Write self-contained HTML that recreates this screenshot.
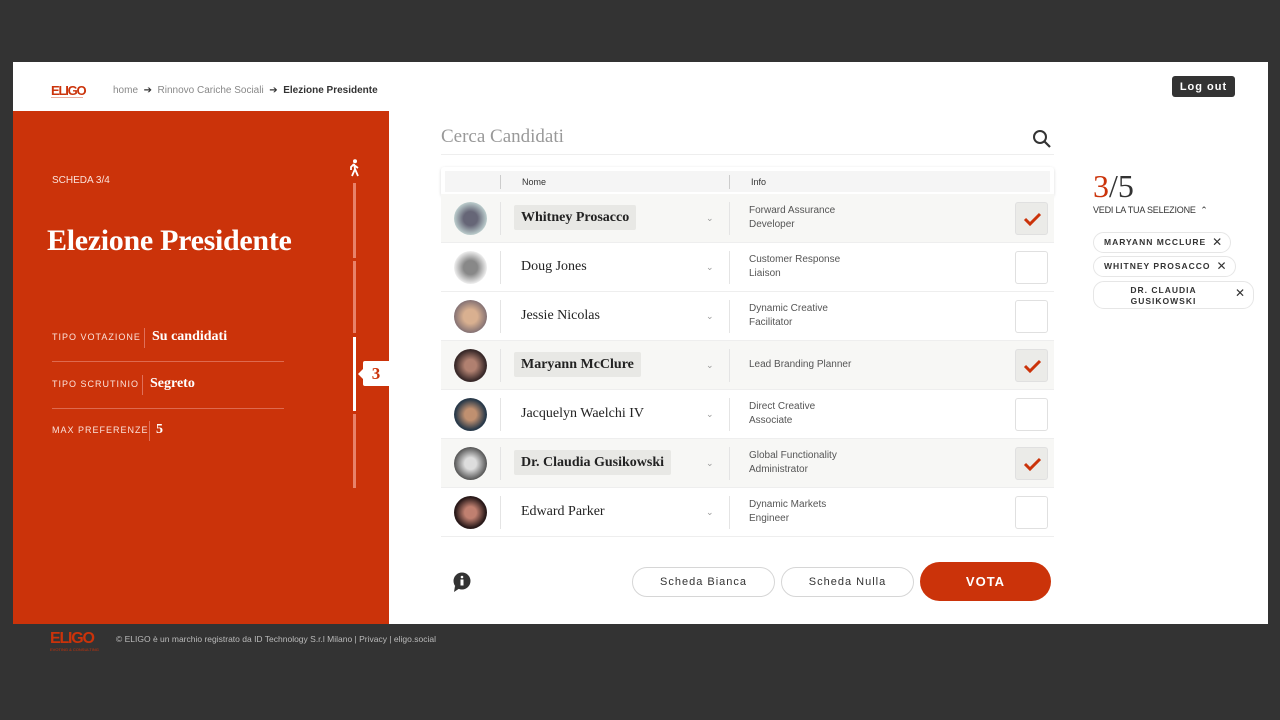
<!DOCTYPE html>
<html><head><meta charset="utf-8"><style>
*{box-sizing:border-box;margin:0;padding:0}
body{width:1280px;height:720px;background:#333;font-family:"Liberation Sans",sans-serif;position:relative;overflow:hidden}
.abs{position:absolute}
.serif{font-family:"Liberation Serif",serif}
#page{left:13px;top:62px;width:1255px;height:562px;background:#fff}
#red{left:13px;top:111px;width:376px;height:513px;background:#cb330a}
.lbl{font-size:9px;letter-spacing:1px;color:#fbe3dc}
.val{font-family:"Liberation Serif",serif;font-weight:bold;color:#fff;font-size:14px}
.row{position:absolute;left:441px;width:613px;height:49px;border-bottom:1px solid #eee}
.row.sel{background:#f7f7f5}
.av{position:absolute;left:13px;top:8px;width:33px;height:33px;border-radius:50%}
.vsep{position:absolute;width:1px;background:#e4e4e4}
.nm{position:absolute;left:73px;top:11px;height:25px;line-height:25px;padding:0 7px;font-family:"Liberation Serif",serif;font-size:14px;color:#222;border-radius:2px}
.sel .nm{background:#e8e8e5;font-weight:bold}
.info{position:absolute;left:308px;top:10px;font-size:10px;line-height:14px;color:#555}
.chev{position:absolute;left:265px;top:19px;font-size:9px;color:#999}
.cb{position:absolute;left:574px;top:8px;width:33px;height:33px;border:1px solid #e0e0e0;border-radius:3px;background:#fff}
.sel .cb{background:#ebebe8}
.chip{position:absolute;left:1093px;height:21px;border:1px solid #e6e6e6;border-radius:11px;font-size:8.5px;letter-spacing:1px;font-weight:bold;color:#333;line-height:19px;padding:0 24px 0 10px;white-space:nowrap}
.chip b{position:absolute;right:7px;top:0;font-size:12px;font-weight:normal}
.btn{position:absolute;top:567px;height:30px;border:1px solid #d6d6d6;border-radius:15px;font-size:11px;letter-spacing:1px;color:#333;text-align:center;line-height:28px;background:#fff}
</style></head><body>
<div id="page" class="abs"></div>
<div class="abs" style="left:51px;top:83px;color:#cb330a;font-weight:bold;font-size:13px;letter-spacing:-1.2px">ELIGO</div>
<div class="abs" style="left:51px;top:97px;width:32px;height:1px;background:#cb330a;opacity:.4"></div>
<div class="abs" style="left:113px;top:85px;font-size:10px;color:#888">home &nbsp;<span style="color:#333">➔</span>&nbsp; Rinnovo Cariche Sociali &nbsp;<span style="color:#333">➔</span>&nbsp; <b style="color:#333">Elezione Presidente</b></div>
<div class="abs" style="left:1172px;top:76px;width:63px;height:21px;background:#333;border-radius:3px;color:#fff;font-size:11px;font-weight:bold;letter-spacing:1px;text-align:center;line-height:22px">Log out</div>

<div id="red" class="abs"></div>
<div class="abs lbl" style="left:52px;top:175px;font-size:10px;letter-spacing:0">SCHEDA 3/4</div>
<div class="abs serif" style="left:47px;top:224px;font-size:30px;font-weight:bold;color:#fff;letter-spacing:-0.3px">Elezione Presidente</div>
<svg class="abs" style="left:347px;top:159px" width="14" height="18" viewBox="0 0 14 18"><circle cx="8" cy="2.2" r="2" fill="#fff"/><path d="M7 5L4 8v3M7 5l1 5-3 7M8 10l3 7M7 6l4 3" fill="none" stroke="#fff" stroke-width="1.8"/></svg>
<div class="abs" style="left:353px;top:183px;width:3px;height:75px;background:#e8826a"></div>
<div class="abs" style="left:353px;top:261px;width:3px;height:72px;background:#e8826a"></div>
<div class="abs" style="left:353px;top:337px;width:3px;height:74px;background:#fff"></div>
<div class="abs" style="left:353px;top:414px;width:3px;height:74px;background:#e8826a"></div>
<div class="abs serif" style="left:363px;top:361px;width:26px;height:25px;background:#fff;border-radius:2px 0 0 2px;color:#cb330a;font-weight:bold;font-size:17px;text-align:center;line-height:25px">3</div>
<div class="abs" style="left:358px;top:369px;width:0;height:0;border:5px solid transparent;border-right-color:#fff;border-left:0"></div>

<div class="abs lbl" style="left:52px;top:332px">TIPO VOTAZIONE</div>
<div class="abs" style="left:144px;top:328px;width:1px;height:20px;background:#e0705a"></div>
<div class="abs val" style="left:152px;top:329px">Su candidati</div>
<div class="abs" style="left:52px;top:361px;width:232px;height:1px;background:#de6a4f"></div>
<div class="abs lbl" style="left:52px;top:379px">TIPO SCRUTINIO</div>
<div class="abs" style="left:142px;top:375px;width:1px;height:20px;background:#e0705a"></div>
<div class="abs val" style="left:150px;top:376px">Segreto</div>
<div class="abs" style="left:52px;top:408px;width:232px;height:1px;background:#de6a4f"></div>
<div class="abs lbl" style="left:52px;top:425px">MAX PREFERENZE</div>
<div class="abs" style="left:149px;top:421px;width:1px;height:20px;background:#e0705a"></div>
<div class="abs val" style="left:156px;top:422px">5</div>

<div class="abs serif" style="left:441px;top:126px;font-size:19px;color:#999">Cerca Candidati</div>
<svg class="abs" style="left:1032px;top:129px" width="20" height="20" viewBox="0 0 20 20"><circle cx="8" cy="8" r="6" fill="none" stroke="#333" stroke-width="2"/><path d="M12.5 12.5L18 18" stroke="#333" stroke-width="2.2"/></svg>
<div class="abs" style="left:441px;top:154px;width:613px;height:1px;background:#eee"></div>

<div class="abs" style="left:441px;top:167px;width:613px;height:29px;background:#fff;border-radius:3px;box-shadow:0 1px 3px rgba(0,0,0,.15)"></div>
<div class="abs" style="left:445px;top:171px;width:605px;height:21px;background:#f5f5f5"></div>
<div class="abs" style="left:500px;top:175px;width:1px;height:14px;background:#ccc"></div>
<div class="abs" style="left:729px;top:175px;width:1px;height:14px;background:#ccc"></div>
<div class="abs" style="left:522px;top:177px;font-size:9px;color:#333">Nome</div>
<div class="abs" style="left:751px;top:177px;font-size:9px;color:#333">Info</div>

<div class="row sel" style="top:194px"><div class="av" style="background:radial-gradient(circle,#667 30%,#bcc 70%)"></div><div class="vsep" style="left:59px;top:8px;height:33px"></div><div class="nm">Whitney Prosacco</div><div class="chev">⌄</div><div class="vsep" style="left:288px;top:8px;height:33px"></div><div class="info">Forward Assurance<br>Developer</div><div class="cb"><svg width="33" height="33"><path d="M9 16l5 5 10-10" fill="none" stroke="#cb330a" stroke-width="3"/></svg></div></div>
<div class="row" style="top:243px"><div class="av" style="background:radial-gradient(circle,#888 30%,#eee 70%)"></div><div class="vsep" style="left:59px;top:8px;height:33px"></div><div class="nm">Doug Jones</div><div class="chev">⌄</div><div class="vsep" style="left:288px;top:8px;height:33px"></div><div class="info">Customer Response<br>Liaison</div><div class="cb"></div></div>
<div class="row" style="top:292px"><div class="av" style="background:radial-gradient(circle,#d9b090 30%,#7a6a70 75%)"></div><div class="vsep" style="left:59px;top:8px;height:33px"></div><div class="nm">Jessie Nicolas</div><div class="chev">⌄</div><div class="vsep" style="left:288px;top:8px;height:33px"></div><div class="info">Dynamic Creative<br>Facilitator</div><div class="cb"></div></div>
<div class="row sel" style="top:341px"><div class="av" style="background:radial-gradient(circle,#b08070 25%,#3a2a2a 65%)"></div><div class="vsep" style="left:59px;top:8px;height:33px"></div><div class="nm">Maryann McClure</div><div class="chev">⌄</div><div class="vsep" style="left:288px;top:8px;height:33px"></div><div class="info" style="top:17px">Lead Branding Planner</div><div class="cb"><svg width="33" height="33"><path d="M9 16l5 5 10-10" fill="none" stroke="#cb330a" stroke-width="3"/></svg></div></div>
<div class="row" style="top:390px"><div class="av" style="background:radial-gradient(circle,#c09070 25%,#2a3a4a 65%)"></div><div class="vsep" style="left:59px;top:8px;height:33px"></div><div class="nm">Jacquelyn Waelchi IV</div><div class="chev">⌄</div><div class="vsep" style="left:288px;top:8px;height:33px"></div><div class="info">Direct Creative<br>Associate</div><div class="cb"></div></div>
<div class="row sel" style="top:439px"><div class="av" style="background:radial-gradient(circle,#ddd 25%,#555 70%)"></div><div class="vsep" style="left:59px;top:8px;height:33px"></div><div class="nm">Dr. Claudia Gusikowski</div><div class="chev">⌄</div><div class="vsep" style="left:288px;top:8px;height:33px"></div><div class="info">Global Functionality<br>Administrator</div><div class="cb"><svg width="33" height="33"><path d="M9 16l5 5 10-10" fill="none" stroke="#cb330a" stroke-width="3"/></svg></div></div>
<div class="row" style="top:488px"><div class="av" style="background:radial-gradient(circle,#c08070 25%,#2a1a1a 65%)"></div><div class="vsep" style="left:59px;top:8px;height:33px"></div><div class="nm">Edward Parker</div><div class="chev">⌄</div><div class="vsep" style="left:288px;top:8px;height:33px"></div><div class="info">Dynamic Markets<br>Engineer</div><div class="cb"></div></div>

<svg class="abs" style="left:452px;top:571px" width="20" height="22" viewBox="0 0 20 20"><circle cx="10" cy="9" r="8.5" fill="#333"/><path d="M3 14L2 20l6-4z" fill="#333"/><circle cx="10" cy="5" r="1.3" fill="#fff"/><rect x="8.5" y="7.5" width="3" height="6" fill="#fff"/></svg>
<div class="btn" style="left:632px;width:143px">Scheda Bianca</div>
<div class="btn" style="left:781px;width:133px">Scheda Nulla</div>
<div class="abs" style="left:920px;top:562px;width:131px;height:39px;background:#cb330a;border-radius:20px;color:#fff;font-size:13px;font-weight:bold;letter-spacing:1px;text-align:center;line-height:39px">VOTA</div>

<div class="abs serif" style="left:1093px;top:168px;font-size:32px;color:#333"><span style="color:#cb330a">3</span>/5</div>
<div class="abs" style="left:1093px;top:205px;font-size:9px;color:#333;letter-spacing:-0.2px">VEDI LA TUA SELEZIONE &nbsp;⌃</div>
<div class="chip" style="top:232px">MARYANN MCCLURE<b>✕</b></div>
<div class="chip" style="top:256px">WHITNEY PROSACCO<b>✕</b></div>
<div class="chip" style="top:281px;width:161px;height:28px;line-height:11px;padding:3px 30px 0 10px;text-align:center;white-space:normal">DR. CLAUDIA<br>GUSIKOWSKI<b style="top:6px">✕</b></div>

<div class="abs" style="left:50px;top:630px;color:#cb330a;font-weight:bold;font-size:16px;letter-spacing:-1.2px">ELIGO</div>
<div class="abs" style="left:50px;top:647px;font-size:4px;color:#cb330a">EVOTING &amp; CONSULTING</div>
<div class="abs" style="left:116px;top:634px;font-size:8.5px;color:#bbb">© ELIGO è un marchio registrato da ID Technology S.r.l Milano | Privacy | eligo.social</div>
</body></html>
